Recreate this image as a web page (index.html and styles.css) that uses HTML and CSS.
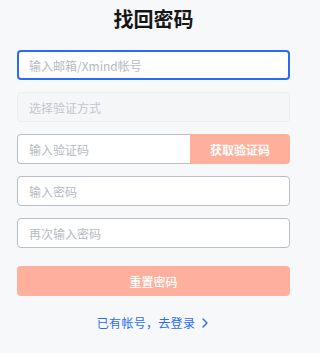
FILE: index.html
```html
<!DOCTYPE html>
<html lang="zh">
<head>
<meta charset="utf-8">
<title>找回密码</title>
<link rel="stylesheet" href="styles.css">
</head>
<body>
<main class="page">
  <h1 class="title">找回密码</h1>
  <form class="form">
    <input class="field field-focus" type="text" placeholder="输入邮箱/Xmind帐号" autofocus>
    <input class="field field-disabled" type="text" placeholder="选择验证方式" disabled>
    <div class="code-row">
      <input class="field code-input" type="text" placeholder="输入验证码">
      <button class="code-btn" type="button">获取验证码</button>
    </div>
    <input class="field" type="password" placeholder="输入密码">
    <input class="field" type="password" placeholder="再次输入密码">
    <button class="submit" type="button">重置密码</button>
  </form>
  <a class="login-link" href="#"><span>已有帐号，去登录</span>
    <svg class="chev" width="6" height="10" viewBox="0 0 6 10"><path d="M1 1 L5 5 L1 9" fill="none" stroke="#2b6cf5" stroke-width="1.4" stroke-linecap="round" stroke-linejoin="round"/></svg>
  </a>
</main>
</body>
</html>
```
FILE: styles.css
```css
* { box-sizing: border-box; }
html, body {
  margin: 0;
  padding: 0;
  background: #f7f8fa;
  font-family: "Noto Sans CJK SC", "Noto Sans", sans-serif;
}
.page {
  width: 273px;
  margin-left: 17px;
  padding-top: 5px;
  display: flex;
  flex-direction: column;
}
.title {
  margin: 0;
  font-size: 20px;
  line-height: 28px;
  font-weight: 700;
  color: #161616;
  text-align: center;
}
.form {
  margin-top: 17px;
  display: flex;
  flex-direction: column;
  gap: 12px;
}
.field {
  display: block;
  width: 100%;
  height: 30px;
  padding: 0 11px;
  border: 1px solid #b9bec8;
  border-radius: 4px;
  background: #fff;
  font-family: inherit;
  font-size: 12px;
  color: #222;
  outline: none;
  caret-color: #000;
}
.field::placeholder { color: #b6bac2; }
.field-focus {
  border: 2px solid #2b6cf5;
  padding: 0 10px;
}
.field-disabled {
  background: #f5f6f8;
  border-color: #eceef1;
}
.field-disabled::placeholder { color: #c3c6cc; }
.code-row {
  display: flex;
  height: 30px;
}
.code-input {
  flex: 1;
  border-radius: 4px 0 0 4px;
  border-right: none;
}
.code-btn {
  width: 100px;
  height: 30px;
  border: none;
  border-radius: 0 4px 4px 0;
  background: #ffb09c;
  color: #fff;
  font-family: inherit;
  font-size: 12px;
  font-weight: 700;
  padding: 0;
}
.submit {
  margin-top: 6px;
  height: 30px;
  border: none;
  border-radius: 4px;
  background: #ffb09c;
  color: #fff;
  font-family: inherit;
  font-size: 12px;
  font-weight: 500;
}
.login-link {
  margin-top: 17px;
  margin-left: -2px;
  align-self: center;
  display: flex;
  align-items: center;
  gap: 7px;
  line-height: 20px;
  font-size: 12px;
  letter-spacing: 0.3px;
  color: #2b6cf5;
  text-decoration: none;
}
.chev { display: block; }
```
